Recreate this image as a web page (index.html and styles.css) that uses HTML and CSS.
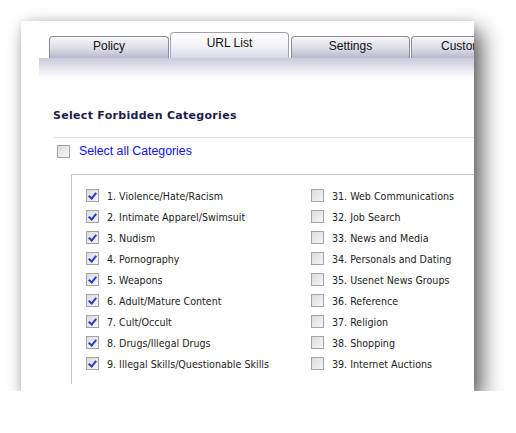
FILE: index.html
```html
<!DOCTYPE html>
<html lang="en">
<head>
    <meta charset="UTF-8">
    <title>URL List - Forbidden Categories</title>
    <link rel="stylesheet" href="styles.css">
</head>
<body>
    <div class="card">
        <!-- Tabs -->
        <ul class="tabs">
            <li class="tab">Policy</li>
            <li class="tab active">URL List</li>
            <li class="tab">Settings</li>
            <li class="tab">Custom</li>
        </ul>
        <div class="tab-band"></div>

        <!-- Categories -->
        <section class="categories">
            <h2>Select Forbidden Categories</h2>
            <label class="select-all">
                <span class="check"></span>
                Select all Categories
            </label>

            <div class="cat-box">
                <div class="cat-col">
                    <label class="cat"><span class="check on"></span>1. Violence/Hate/Racism</label>
                    <label class="cat"><span class="check on"></span>2. Intimate Apparel/Swimsuit</label>
                    <label class="cat"><span class="check on"></span>3. Nudism</label>
                    <label class="cat"><span class="check on"></span>4. Pornography</label>
                    <label class="cat"><span class="check on"></span>5. Weapons</label>
                    <label class="cat"><span class="check on"></span>6. Adult/Mature Content</label>
                    <label class="cat"><span class="check on"></span>7. Cult/Occult</label>
                    <label class="cat"><span class="check on"></span>8. Drugs/Illegal Drugs</label>
                    <label class="cat"><span class="check on"></span>9. Illegal Skills/Questionable Skills</label>
                </div>
                <div class="cat-col">
                    <label class="cat"><span class="check"></span>31. Web Communications</label>
                    <label class="cat"><span class="check"></span>32. Job Search</label>
                    <label class="cat"><span class="check"></span>33. News and Media</label>
                    <label class="cat"><span class="check"></span>34. Personals and Dating</label>
                    <label class="cat"><span class="check"></span>35. Usenet News Groups</label>
                    <label class="cat"><span class="check"></span>36. Reference</label>
                    <label class="cat"><span class="check"></span>37. Religion</label>
                    <label class="cat"><span class="check"></span>38. Shopping</label>
                    <label class="cat"><span class="check"></span>39. Internet Auctions</label>
                </div>
            </div>
        </section>
    </div>
</body>
</html>
```
FILE: styles.css
```css
* {
    margin: 0;
    padding: 0;
    box-sizing: border-box;
}

body {
    background-color: #fff;
    font-family: "DejaVu Sans", Verdana, sans-serif;
    color: #222;
}

/* Card with the drop shadow */
.card {
    margin: 21px 0 0 21px;
    width: 453px;
    height: 370px;
    background-color: #fff;
    overflow: hidden;
    box-shadow: 8px 10px 20px rgba(0, 0, 0, 0.62), 0 0 8px rgba(0, 0, 0, 0.12);
}

/* Tabs */
.tabs {
    list-style-type: none;
    display: flex;
    align-items: flex-end;
    gap: 1px;
    padding: 12px 0 0 28px;
    height: 37px;
    white-space: nowrap;
}

.tab {
    flex: 0 0 119px;
    height: 22px;
    border: 1px solid #8c8c98;
    border-bottom: none;
    border-radius: 4px 4px 0 0;
    background: linear-gradient(#f6f6f8, #dcdce6 55%, #b8b8cc);
    font-family: "Liberation Sans", Arial, sans-serif;
    font-size: 12px;
    line-height: 19px;
    text-align: center;
    color: #111;
    overflow: hidden;
}

.tab:first-child {
    flex-basis: 120px;
}

.tab:last-child {
    flex-basis: 90px;
    text-align: left;
    padding-left: 29px;
}

.tab.active {
    height: 26px;
    border-color: #a0a0b0;
    background: linear-gradient(#fff, #f4f4f8 50%, #d8d8e8);
    line-height: 21px;
    margin-right: 1px;
}

.tab-band {
    margin-left: 18px;
    height: 20px;
    background: linear-gradient(#cacadc, #e6e6ee 55%, #fff);
}

/* Categories */
.categories {
    padding: 31px 0 0 32px;
}

.categories h2 {
    font-family: "DejaVu Sans", Verdana, sans-serif;
    font-size: 11px;
    font-weight: bold;
    letter-spacing: 0.3px;
    color: #1c1c4c;
    padding-bottom: 15px;
    border-bottom: 1px solid #e0e0e0;
}

.select-all {
    display: flex;
    align-items: center;
    gap: 9px;
    margin: 5px 0 0 4px;
    height: 16px;
    font-family: "Liberation Sans", Arial, sans-serif;
    font-size: 12.3px;
    color: #1010f0;
}

.cat-box {
    display: grid;
    grid-template-columns: 225px 1fr;
    margin: 15px 0 0 18px;
    padding: 10px 0 0 14px;
    height: 210px;
    border-top: 1px solid #c4c4c4;
    border-left: 1px solid #c4c4c4;
}

.cat {
    display: flex;
    align-items: center;
    gap: 8px;
    height: 21px;
    font-family: "DejaVu Sans Condensed", "DejaVu Sans", Tahoma, sans-serif;
    font-stretch: semi-condensed;
    font-size: 10.6px;
    color: #222;
    white-space: nowrap;
}

/* Checkboxes */
.check {
    flex: 0 0 13px;
    width: 13px;
    height: 13px;
    border: 1px solid #a4a4a4;
    background: linear-gradient(135deg, #dcdcdc, #f6f6f6);
    position: relative;
}

.check.on::after {
    content: "";
    position: absolute;
    left: 3px;
    top: 1px;
    width: 3px;
    height: 6px;
    border: solid #2a3cc8;
    border-width: 0 2px 2px 0;
    transform: rotate(40deg);
}
```
